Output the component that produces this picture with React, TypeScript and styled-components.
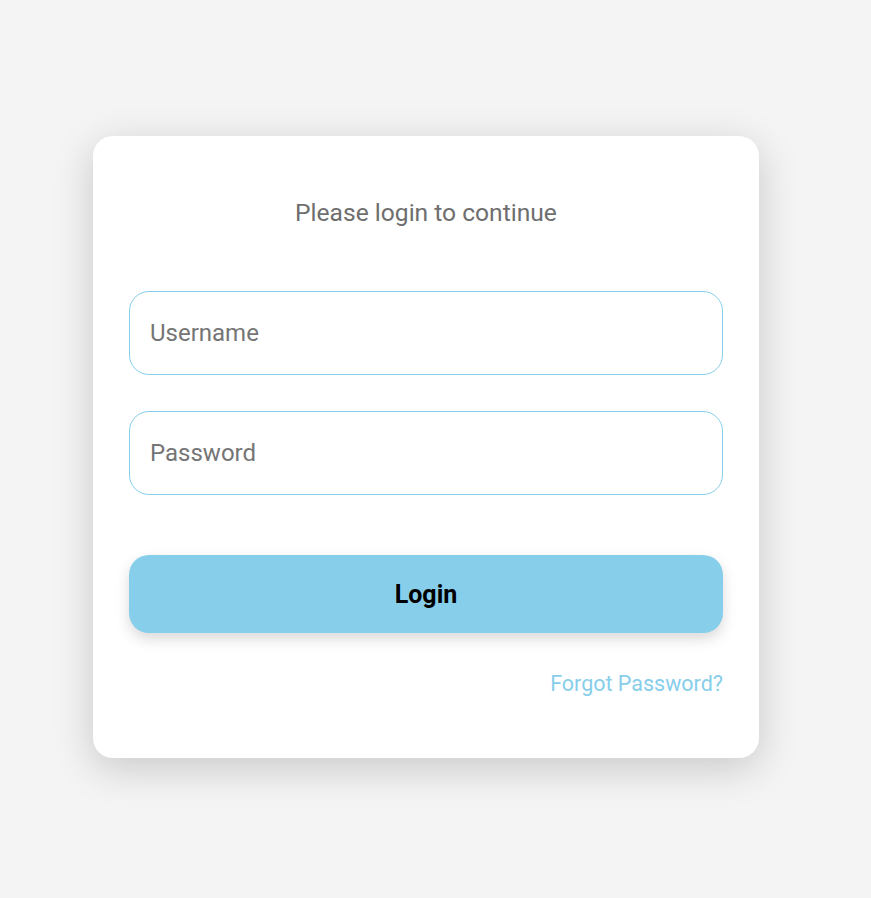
import React from "react";
import styled, { createGlobalStyle } from "styled-components";

const Global = createGlobalStyle`
  html, body { margin: 0; padding: 0; background: #f4f4f4; }
  body { font-family: Roboto, "Noto Sans", Arial, sans-serif; }
  * { box-sizing: border-box; }
`;

const Page = styled.div`
  min-height: 100vh;
  display: flex;
  align-items: center;
  justify-content: center;
  padding: 0 19px 4px 0;
`;

const Card = styled.div`
  width: 666px;
  background: #fff;
  border-radius: 20px;
  box-shadow: 0 10px 40px rgba(0, 0, 0, 0.18);
  padding: 63px 36px 61px;
  display: flex;
  flex-direction: column;
`;

const Title = styled.h2`
  margin: 0 0 64px;
  text-align: center;
  font-weight: 400;
  font-size: 24.6px;
  line-height: 28px;
  color: #6e6e6e;
`;

const Input = styled.input<{ $mb: number }>`
  height: 84px;
  width: 100%;
  border: 1px solid #87ceeb;
  border-radius: 20px;
  padding: 0 20px;
  font-family: Roboto, sans-serif;
  font-size: 24px;
  color: #333;
  outline: none;
  margin-bottom: ${(p) => p.$mb}px;
  &::placeholder { color: #757575; }
`;

const Button = styled.button`
  height: 78px;
  width: 100%;
  border: none;
  border-radius: 20px;
  background: #87ceeb;
  color: #000;
  font-family: Roboto, sans-serif;
  font-weight: 700;
  font-size: 25px;
  box-shadow: 0 6px 14px rgba(0, 0, 0, 0.15);
  cursor: pointer;
  margin-bottom: 38px;
`;

const Forgot = styled.a`
  align-self: flex-end;
  color: #87ceeb;
  font-size: 21.5px;
  line-height: 26px;
  text-decoration: none;
`;

export default function App() {
  return (
    <>
      <Global />
      <Page>
        <Card>
          <Title>Please login to continue</Title>
          <Input $mb={36} placeholder="Username" />
          <Input $mb={60} type="password" placeholder="Password" />
          <Button>Login</Button>
          <Forgot href="#">Forgot Password?</Forgot>
        </Card>
      </Page>
    </>
  );
}
